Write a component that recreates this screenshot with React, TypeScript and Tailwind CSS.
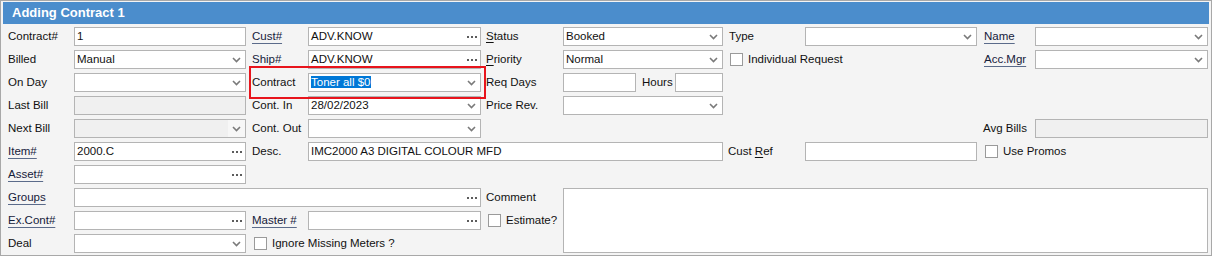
import React from 'react';

type Kind = 'text' | 'select' | 'lookup';

const font = { fontFamily: '"Liberation Sans", Arial, sans-serif' };

function Chevron() {
  return (
    <svg width="9" height="6" viewBox="0 0 9 6" className="shrink-0">
      <path d="M1 1 L4.5 4.5 L8 1" fill="none" stroke="#7a7a7a" strokeWidth="1.6" />
    </svg>
  );
}

function Dots() {
  return (
    <div className="flex shrink-0 gap-[2px]">
      <span className="h-[2px] w-[2px] bg-[#5c5c5c]" />
      <span className="h-[2px] w-[2px] bg-[#5c5c5c]" />
      <span className="h-[2px] w-[2px] bg-[#5c5c5c]" />
    </div>
  );
}

// plain label, optional "link" underline or accelerator letter
function Label({ text, link, acc, cls }: { text: string; link?: boolean; acc?: number; cls: string }) {
  let body: React.ReactNode = text;
  if (acc !== undefined) {
    body = (
      <>
        {text.slice(0, acc)}
        <span className="underline underline-offset-[2px]">{text[acc]}</span>
        {text.slice(acc + 1)}
      </>
    );
  }
  return (
    <div className={`flex h-[19px] items-center text-[11.5px] whitespace-nowrap ${cls}`}>
      {link ? (
        <span className="text-[#15203a] underline decoration-[#5b6b8a] underline-offset-[3px]">{text}</span>
      ) : (
        <span className="text-[#111]">{body}</span>
      )}
    </div>
  );
}

function Field({
  kind = 'text',
  value,
  disabled,
  selected,
  cls,
}: {
  kind?: Kind;
  value?: string;
  disabled?: boolean;
  selected?: boolean;
  cls: string;
}) {
  return (
    <div
      className={`flex h-[19px] items-center border border-[#b4b4b4] text-[11.5px] text-[#111] ${
        disabled ? 'bg-[#f0f0f0]' : 'bg-white'
      } ${cls}`}
    >
      <div className="min-w-0 flex-1 truncate pl-[2px]">
        {selected ? <span className="bg-[#0078d7] pr-[1px] text-white">{value}</span> : value}
      </div>
      {kind === 'select' && (
        <div className={`flex h-full w-[17px] items-center justify-center ${disabled ? 'bg-[#f7f7f7]' : ''}`}>
          <Chevron />
        </div>
      )}
      {kind === 'lookup' && (
        <div className="flex h-full w-[17px] items-center justify-center">
          <Dots />
        </div>
      )}
    </div>
  );
}

function Check({ text, cls }: { text: string; cls: string }) {
  return (
    <div className={`flex h-[19px] items-center gap-[5px] text-[11.5px] whitespace-nowrap text-[#111] ${cls}`}>
      <span className="h-[13px] w-[13px] shrink-0 border border-[#9a9a9a] bg-white" />
      <span>{text}</span>
    </div>
  );
}

export default function App() {
  return (
    <div className="h-[256px] w-[1212px] border border-[#a8a8a8] bg-[#f4f4f4]" style={font}>
      <div className="mx-[2px] mt-[1px] flex h-[22px] items-center bg-[#4b8dcc] pl-[9px] text-[13px] font-bold text-white">
        Adding Contract 1
      </div>

      <div className="mt-[3px] ml-[7px] grid auto-rows-[23px] grid-cols-[66px_172px_6px_56px_173px_5px_77px_160px_6px_76px_172px_7px_51px_173px]">
        {/* row 1 */}
        <Label text="Contract#" cls="col-start-1 row-start-1" />
        <Field value="1" cls="col-start-2 row-start-1" />
        <Label text="Cust#" link cls="col-start-4 row-start-1" />
        <Field kind="lookup" value="ADV.KNOW" cls="col-start-5 row-start-1" />
        <Label text="Status" acc={0} cls="col-start-7 row-start-1" />
        <Field kind="select" value="Booked" cls="col-start-8 row-start-1" />
        <Label text="Type" cls="col-start-10 row-start-1" />
        <Field kind="select" cls="col-start-11 row-start-1" />
        <Label text="Name" link cls="col-start-13 row-start-1" />
        <Field kind="select" cls="col-start-14 row-start-1" />

        {/* row 2 */}
        <Label text="Billed" cls="col-start-1 row-start-2" />
        <Field kind="select" value="Manual" cls="col-start-2 row-start-2" />
        <Label text="Ship#" link cls="col-start-4 row-start-2" />
        <Field kind="lookup" value="ADV.KNOW" cls="col-start-5 row-start-2" />
        <Label text="Priority" acc={0} cls="col-start-7 row-start-2" />
        <Field kind="select" value="Normal" cls="col-start-8 row-start-2" />
        <Check text="Individual Request" cls="col-start-10 col-span-2 row-start-2 pl-[1px]" />
        <Label text="Acc.Mgr" link cls="col-start-13 row-start-2" />
        <Field kind="select" cls="col-start-14 row-start-2" />

        {/* row 3 */}
        <Label text="On Day" cls="col-start-1 row-start-3" />
        <Field kind="select" cls="col-start-2 row-start-3" />
        <div className="relative col-start-4 col-span-2 row-start-3 grid grid-cols-[56px_173px]">
          <Label text="Contract" cls="" />
          <Field kind="select" value="Toner all $0" selected cls="" />
          <div className="pointer-events-none absolute -top-[7px] -right-[5px] -bottom-[3px] -left-[3px] border-2 border-[#e8141c]" />
        </div>
        <Label text="Req Days" cls="col-start-7 row-start-3" />
        <div className="col-start-8 row-start-3 flex items-start">
          <Field cls="w-[73px]" />
          <Label text="Hours" cls="ml-[6px]" />
          <Field cls="ml-auto w-[48px]" />
        </div>

        {/* row 4 */}
        <Label text="Last Bill" cls="col-start-1 row-start-4" />
        <Field disabled cls="col-start-2 row-start-4" />
        <Label text="Cont. In" cls="col-start-4 row-start-4" />
        <Field kind="select" value="28/02/2023" cls="col-start-5 row-start-4" />
        <Label text="Price Rev." cls="col-start-7 row-start-4" />
        <Field kind="select" cls="col-start-8 row-start-4" />

        {/* row 5 */}
        <Label text="Next Bill" cls="col-start-1 row-start-5" />
        <Field kind="select" disabled cls="col-start-2 row-start-5" />
        <Label text="Cont. Out" cls="col-start-4 row-start-5" />
        <Field kind="select" cls="col-start-5 row-start-5" />
        <Label text="Avg Bills" cls="col-start-13 row-start-5 -ml-[1px]" />
        <Field disabled cls="col-start-14 row-start-5" />

        {/* row 6 */}
        <Label text="Item#" link cls="col-start-1 row-start-6" />
        <Field kind="lookup" value="2000.C" cls="col-start-2 row-start-6" />
        <Label text="Desc." cls="col-start-4 row-start-6" />
        <Field value="IMC2000 A3 DIGITAL COLOUR MFD" cls="col-start-5 col-span-4 row-start-6" />
        <Label text="Cust Ref" acc={5} cls="col-start-10 row-start-6 -ml-[1px]" />
        <Field cls="col-start-11 row-start-6" />
        <Check text="Use Promos" cls="col-start-13 col-span-2 row-start-6 pl-[1px]" />

        {/* row 7 */}
        <Label text="Asset#" link cls="col-start-1 row-start-7" />
        <Field kind="lookup" cls="col-start-2 row-start-7" />

        {/* row 8 */}
        <Label text="Groups" link cls="col-start-1 row-start-8" />
        <Field kind="lookup" cls="col-start-2 col-span-4 row-start-8" />
        <Label text="Comment" cls="col-start-7 row-start-8" />
        <div className="col-start-8 col-span-7 row-span-3 row-start-8 mb-[4px] border border-[#b4b4b4] bg-white" />

        {/* row 9 */}
        <Label text="Ex.Cont#" link cls="col-start-1 row-start-9" />
        <Field kind="lookup" cls="col-start-2 row-start-9" />
        <Label text="Master #" link cls="col-start-4 row-start-9" />
        <Field kind="lookup" cls="col-start-5 row-start-9" />
        <Check text="Estimate?" cls="col-start-7 row-start-9 pl-[2px]" />

        {/* row 10 */}
        <Label text="Deal" cls="col-start-1 row-start-10" />
        <Field kind="select" cls="col-start-2 row-start-10" />
        <Check text="Ignore Missing Meters ?" cls="col-start-4 col-span-2 row-start-10 pl-[2px]" />
      </div>
    </div>
  );
}
